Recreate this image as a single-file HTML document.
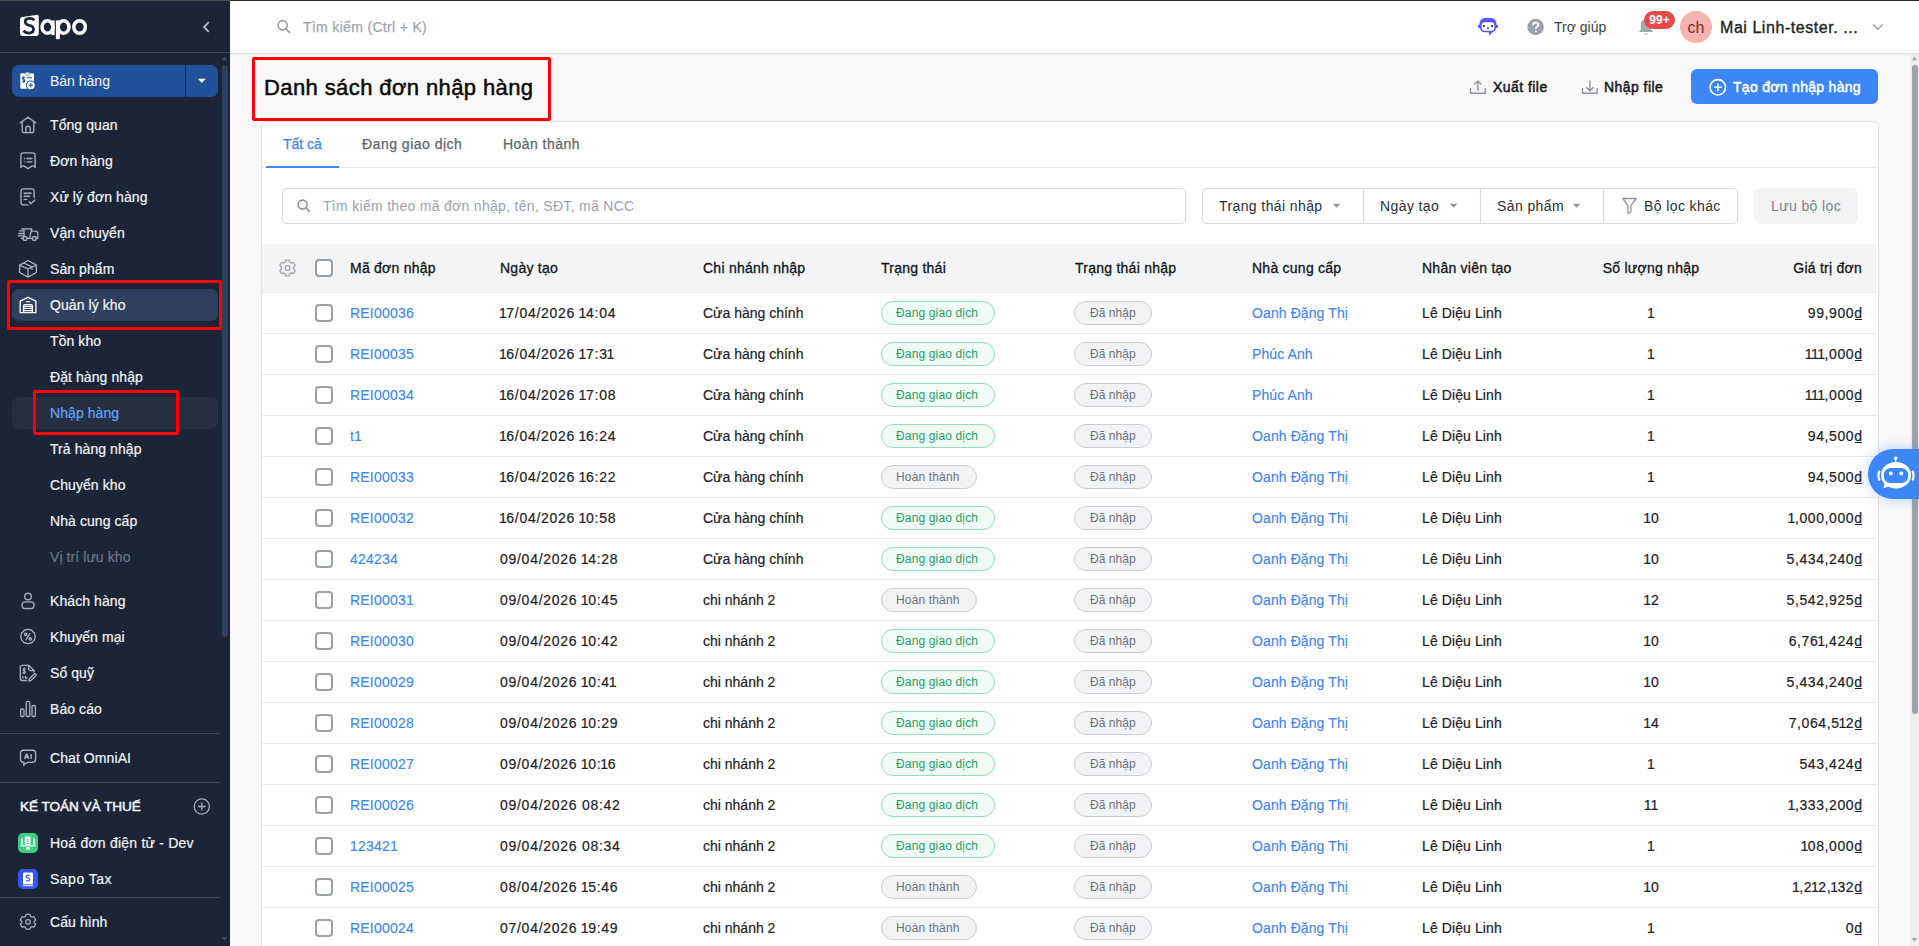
<!DOCTYPE html><html><head><meta charset="utf-8"><style>
html,body{margin:0;padding:0;}
body{width:1919px;height:946px;overflow:hidden;position:relative;background:#f8f8f8;font-family:"Liberation Sans", sans-serif;}
.a{position:absolute;}
.t{position:absolute;white-space:nowrap;}
svg.a{overflow:visible;}
</style></head><body>
<div class="a" style="left:0px;top:0px;width:230px;height:946px;background:#1c2537"></div><svg class="a" style="left:18px;top:12px" width="72" height="30" viewBox="0 0 72 30">
<path d="M2 7.6 Q2 5.4 4.2 5.1 L18.4 2.9 Q20.8 2.6 20.8 5 L20.8 21.6 Q20.8 24 18.4 24 L4.4 24 Q2 24 2 21.6 Z" fill="#fff"/>
<path d="M16.3 8.3 Q14.6 6.3 11.3 6.4 Q7.2 6.6 7.2 9.8 Q7.3 12.6 11.3 13.3 Q15.6 14 15.5 17.4 Q15.3 21 11 21.1 Q7.4 21.1 5.5 18.6" fill="none" stroke="#1c2537" stroke-width="2.7"/>
<ellipse cx="29.4" cy="15" rx="5.4" ry="6.2" fill="none" stroke="#fff" stroke-width="3.5"/>
<path d="M35 8.4 V23.2" stroke="#fff" stroke-width="3.4"/>
<ellipse cx="45.6" cy="15" rx="5.4" ry="6.2" fill="none" stroke="#fff" stroke-width="3.5"/>
<path d="M39.9 8.4 V27.2" stroke="#fff" stroke-width="4"/>
<ellipse cx="61.6" cy="15" rx="5.8" ry="6.3" fill="none" stroke="#fff" stroke-width="3.5"/>
</svg><svg class="a" style="left:200px;top:20px" width="12" height="14" viewBox="0 0 12 14"><path d="M8.8 2.2 L4 7 L8.8 11.8" fill="none" stroke="#b7bcc6" stroke-width="1.8"/></svg><div class="a" style="left:0px;top:52px;width:230px;height:1px;background:#3b4455"></div><div class="a" style="left:222px;top:53px;width:8px;height:893px;background:#1a2334"></div><svg class="a" style="left:220px;top:54px" width="10" height="8" viewBox="0 0 10 8"><path d="M1.5 6.5 L4.5 2.5 L7.5 6.5 Z" fill="#34466a"/></svg><div class="a" style="left:222px;top:65px;width:6px;height:572px;background:#2f3f5e;border-radius:3px"></div><svg class="a" style="left:220px;top:935px" width="10" height="8" viewBox="0 0 10 8"><path d="M1.5 2 L4.5 6 L7.5 2 Z" fill="#34466a"/></svg><div class="a" style="left:12px;top:65px;width:206px;height:32px;background:#215299;border-radius:7px"></div><div class="a" style="left:185px;top:65px;width:1px;height:32px;background:#1a2840"></div><svg class="a" style="left:197px;top:78px" width="10" height="6" viewBox="0 0 10 6"><path d="M0.8 0.8 L4.8 4.8 L8.8 0.8 Z" fill="#fff"/></svg><svg class="a" style="left:14px;top:66px" width="30" height="30" viewBox="0 0 30 30">
<rect x="6.3" y="7.3" width="13.7" height="15.5" rx="1.2" fill="#fff"/>
<rect x="11.2" y="6.3" width="4.8" height="2.6" rx="1.2" fill="#fff" stroke="#215299" stroke-width="0.6"/>
<path d="M10.9 11.6 C10.5 10.9 8.5 10.8 8.5 12.2 C8.5 13.5 10.9 13.2 10.9 14.7 C10.9 16 8.9 16.1 8.3 15.3 M9.7 10.2 V16.8" fill="none" stroke="#215299" stroke-width="1.05"/>
<rect x="12.8" y="11.2" width="5" height="1.1" fill="#215299"/>
<circle cx="16.8" cy="19.3" r="4.9" fill="#215299"/>
<circle cx="16.8" cy="19.3" r="3.9" fill="#fff"/>
<path d="M14.6 19.3 H19 M16.8 17.1 V21.5" stroke="#215299" stroke-width="1.1"/>
</svg><div class="t" style="left:50px;top:71.0px;font-size:14px;line-height:20px;color:#f4f6f9;">Bán hàng</div><div class="a" style="left:12px;top:289px;width:206px;height:32px;background:#2f3f5e;border-radius:7px"></div><div class="a" style="left:12px;top:397px;width:206px;height:32px;background:#252f40;border-radius:7px"></div><svg class="a" style="left:14px;top:112px" width="30" height="30" viewBox="0 0 30 30"><path d="M6.2 10.9 L14 5.2 L21.8 10.9" fill="none" stroke="#a9b0bc" stroke-width="1.35" stroke-linecap="round" stroke-linejoin="round"/><path d="M8.2 9.6 V18.4 a2.2 2.2 0 0 0 2.2 2.2 H17.6 a2.2 2.2 0 0 0 2.2 -2.2 V9.6" fill="none" stroke="#a9b0bc" stroke-width="1.35" stroke-linecap="round" stroke-linejoin="round"/><path d="M11.9 20.5 V16.4 a2.15 2.15 0 0 1 4.3 0 V20.5" fill="none" stroke="#a9b0bc" stroke-width="1.35" stroke-linecap="round" stroke-linejoin="round"/></svg><div class="t" style="left:50px;top:115.0px;font-size:14px;line-height:20px;color:#f1f3f6;letter-spacing:0.08px;-webkit-text-stroke:0.2px #f1f3f6;">Tổng quan</div><svg class="a" style="left:14px;top:148px" width="30" height="30" viewBox="0 0 30 30"><path d="M6.9 19.6 V7.2 a2.3 2.3 0 0 1 2.3 -2.3 H18.8 a2.3 2.3 0 0 1 2.3 2.3 V19.6 Q19.8 17.2 17.8 18.2 Q16 19.3 14 20.6 Q12 19.3 10.2 18.2 Q8.2 17.2 6.9 19.6 Z" fill="none" stroke="#a9b0bc" stroke-width="1.35" stroke-linecap="round" stroke-linejoin="round"/><path d="M10.5 10.5 H10.6 M12.8 10.5 H18 M10.5 13.8 H10.6 M13 13.8 H17.9" fill="none" stroke="#a9b0bc" stroke-width="1.35" stroke-linecap="round" stroke-linejoin="round"/></svg><div class="t" style="left:50px;top:151.0px;font-size:14px;line-height:20px;color:#f1f3f6;letter-spacing:0.08px;-webkit-text-stroke:0.2px #f1f3f6;">Đơn hàng</div><svg class="a" style="left:14px;top:184px" width="30" height="30" viewBox="0 0 30 30"><path d="M14 20.9 H9.3 a2.3 2.3 0 0 1 -2.3 -2.3 V7.1 a2.3 2.3 0 0 1 2.3 -2.3 H17.8 a2.3 2.3 0 0 1 2.3 2.3 V13.6" fill="none" stroke="#a9b0bc" stroke-width="1.35" stroke-linecap="round" stroke-linejoin="round"/><path d="M10.1 9.2 H17.1 M10.1 12.2 H15.6 M10.1 15.4 H12.6" fill="none" stroke="#a9b0bc" stroke-width="1.35" stroke-linecap="round" stroke-linejoin="round"/><path d="M15.2 17.8 L16.8 19.7 L20.8 15.9" fill="none" stroke="#a9b0bc" stroke-width="1.35" stroke-linecap="round" stroke-linejoin="round"/></svg><div class="t" style="left:50px;top:187.0px;font-size:14px;line-height:20px;color:#f1f3f6;letter-spacing:0.08px;-webkit-text-stroke:0.2px #f1f3f6;">Xử lý đơn hàng</div><svg class="a" style="left:14px;top:220px" width="30" height="30" viewBox="0 0 30 30"><path d="M7.6 8.9 H17.6 L15.5 18.4 M17.9 11.1 H21.3 a2.5 2.5 0 0 1 2.5 2.5 V18.4 H22.3 M18.3 18.4 H13.1 M9.2 18.4 H7.4 M10 8.9 V16.5" fill="none" stroke="#a9b0bc" stroke-width="1.35" stroke-linecap="round" stroke-linejoin="round"/><circle cx="11.1" cy="18.4" r="1.9" fill="none" stroke="#a9b0bc" stroke-width="1.35" stroke-linecap="round" stroke-linejoin="round"/><circle cx="20.3" cy="18.4" r="1.9" fill="none" stroke="#a9b0bc" stroke-width="1.35" stroke-linecap="round" stroke-linejoin="round"/><path d="M5.6 10.8 H9.4 M4.8 13.5 H9.4 M4.2 15.9 H9.4" fill="none" stroke="#a9b0bc" stroke-width="1.35" stroke-linecap="round" stroke-linejoin="round"/></svg><div class="t" style="left:50px;top:223.0px;font-size:14px;line-height:20px;color:#f1f3f6;letter-spacing:0.08px;-webkit-text-stroke:0.2px #f1f3f6;">Vận chuyển</div><svg class="a" style="left:14px;top:256px" width="30" height="30" viewBox="0 0 30 30"><path d="M14 4.5 L22.4 9.2 V16.5 L14 21.1 L5.6 16.5 V9.2 Z M5.6 9.2 L14 12.8 L22.4 9.2 M14 12.8 V21.1 M9.6 7 L18 10.8 V13.2" fill="none" stroke="#a9b0bc" stroke-width="1.35" stroke-linecap="round" stroke-linejoin="round"/></svg><div class="t" style="left:50px;top:259.0px;font-size:14px;line-height:20px;color:#f1f3f6;letter-spacing:0.08px;-webkit-text-stroke:0.2px #f1f3f6;">Sản phẩm</div><svg class="a" style="left:14px;top:290px" width="30" height="30" viewBox="0 0 30 30"><path d="M6.2 22.6 V11.2 L14 7.3 L21.9 11.2 V22.6 Z M12.4 11.6 H15.5 M9.6 22.6 V15.6 a1 1 0 0 1 1 -1 H17.3 a1 1 0 0 1 1 1 V22.6 M9.6 18.4 H18.3 M9.6 20.6 H18.3 M9.6 16.4 H18.3" fill="none" stroke="#f3f5f8" stroke-width="1.4" stroke-linejoin="round" stroke-linecap="round"/></svg><div class="t" style="left:50px;top:295.0px;font-size:14px;line-height:20px;color:#f4f6f9;letter-spacing:0.08px;-webkit-text-stroke:0.2px #f4f6f9;">Quản lý kho</div><div class="t" style="left:50px;top:331.0px;font-size:14px;line-height:20px;color:#f1f3f6;letter-spacing:0.08px;-webkit-text-stroke:0.2px #f1f3f6;">Tồn kho</div><div class="t" style="left:50px;top:367.0px;font-size:14px;line-height:20px;color:#f1f3f6;letter-spacing:0.08px;-webkit-text-stroke:0.2px #f1f3f6;">Đặt hàng nhập</div><div class="t" style="left:50px;top:403.0px;font-size:14px;line-height:20px;color:#62a6f9;letter-spacing:0.08px;-webkit-text-stroke:0.2px #62a6f9;">Nhập hàng</div><div class="t" style="left:50px;top:439.0px;font-size:14px;line-height:20px;color:#f1f3f6;letter-spacing:0.08px;-webkit-text-stroke:0.2px #f1f3f6;">Trả hàng nhập</div><div class="t" style="left:50px;top:475.0px;font-size:14px;line-height:20px;color:#f1f3f6;letter-spacing:0.08px;-webkit-text-stroke:0.2px #f1f3f6;">Chuyển kho</div><div class="t" style="left:50px;top:511.0px;font-size:14px;line-height:20px;color:#f1f3f6;letter-spacing:0.08px;-webkit-text-stroke:0.2px #f1f3f6;">Nhà cung cấp</div><div class="t" style="left:50px;top:547.0px;font-size:14px;line-height:20px;color:#6f7785;letter-spacing:0.08px;-webkit-text-stroke:0.2px #6f7785;">Vị trí lưu kho</div><svg class="a" style="left:14px;top:586px" width="30" height="30" viewBox="0 0 30 30"><circle cx="14" cy="10.5" r="3.25" fill="none" stroke="#a9b0bc" stroke-width="1.35" stroke-linecap="round" stroke-linejoin="round"/><rect x="8" y="15.8" width="12.1" height="6.7" rx="3.3" fill="none" stroke="#a9b0bc" stroke-width="1.35" stroke-linecap="round" stroke-linejoin="round"/></svg><div class="t" style="left:50px;top:591.0px;font-size:14px;line-height:20px;color:#f1f3f6;letter-spacing:0.08px;-webkit-text-stroke:0.2px #f1f3f6;">Khách hàng</div><svg class="a" style="left:14px;top:622px" width="30" height="30" viewBox="0 0 30 30"><path d="M13.13 7.46 Q14.00 6.90 14.87 7.46 Q15.73 8.03 16.77 7.97 Q17.80 7.92 18.27 8.84 Q18.74 9.76 19.66 10.23 Q20.58 10.70 20.53 11.73 Q20.47 12.77 21.04 13.63 Q21.60 14.50 21.04 15.37 Q20.47 16.23 20.53 17.27 Q20.58 18.30 19.66 18.77 Q18.74 19.24 18.27 20.16 Q17.80 21.08 16.77 21.03 Q15.73 20.97 14.87 21.54 Q14.00 22.10 13.13 21.54 Q12.27 20.97 11.23 21.03 Q10.20 21.08 9.73 20.16 Q9.26 19.24 8.34 18.77 Q7.42 18.30 7.47 17.27 Q7.53 16.23 6.96 15.37 Q6.40 14.50 6.96 13.63 Q7.53 12.77 7.47 11.73 Q7.42 10.70 8.34 10.23 Q9.26 9.76 9.73 8.84 Q10.20 7.92 11.23 7.97 Q12.27 8.03 13.13 7.46 Z" fill="none" stroke="#a9b0bc" stroke-width="1.35" stroke-linecap="round" stroke-linejoin="round"/><circle cx="11.7" cy="12.4" r="1.15" fill="none" stroke="#a9b0bc" stroke-width="1.35" stroke-linecap="round" stroke-linejoin="round"/><circle cx="16.3" cy="16.9" r="1.15" fill="none" stroke="#a9b0bc" stroke-width="1.35" stroke-linecap="round" stroke-linejoin="round"/><path d="M15.9 11.6 L12.1 17.7" fill="none" stroke="#a9b0bc" stroke-width="1.35" stroke-linecap="round" stroke-linejoin="round"/></svg><div class="t" style="left:50px;top:627.0px;font-size:14px;line-height:20px;color:#f1f3f6;letter-spacing:0.08px;-webkit-text-stroke:0.2px #f1f3f6;">Khuyến mại</div><svg class="a" style="left:14px;top:658px" width="30" height="30" viewBox="0 0 30 30"><path d="M12.8 22.5 H8.3 a2 2 0 0 1 -2 -2 V9.3 a2 2 0 0 1 2 -2 H14.6 L20 12.6 V14" fill="none" stroke="#a9b0bc" stroke-width="1.35" stroke-linecap="round" stroke-linejoin="round"/><path d="M14.6 7.3 V10.6 a2 2 0 0 0 2 2 H20" fill="none" stroke="#a9b0bc" stroke-width="1.35" stroke-linecap="round" stroke-linejoin="round"/><path d="M11.3 10.8 Q10 10.3 9.3 11.2 Q8.8 12.4 10.2 12.8 Q11.6 13.3 11.1 14.5 Q10.4 15.4 9 14.8 M10.2 9.8 V15.8" fill="none" stroke="#a9b0bc" stroke-width="1.35" stroke-linecap="round" stroke-linejoin="round"/><path d="M8.8 18.4 V20 M11.5 18.4 V20 H13" fill="none" stroke="#a9b0bc" stroke-width="1.35" stroke-linecap="round" stroke-linejoin="round"/><path d="M15 23 L15.4 20.8 L20.1 16.1 a1.1 1.1 0 0 1 1.6 1.6 L17 22.4 Z" fill="none" stroke="#a9b0bc" stroke-width="1.35" stroke-linecap="round" stroke-linejoin="round"/></svg><div class="t" style="left:50px;top:663.0px;font-size:14px;line-height:20px;color:#f1f3f6;letter-spacing:0.08px;-webkit-text-stroke:0.2px #f1f3f6;">Sổ quỹ</div><svg class="a" style="left:14px;top:694px" width="30" height="30" viewBox="0 0 30 30"><rect x="6.6" y="15" width="3.4" height="7.5" rx="1.2" fill="none" stroke="#a9b0bc" stroke-width="1.35" stroke-linecap="round" stroke-linejoin="round"/><rect x="12.3" y="7.4" width="3.4" height="15.1" rx="1.2" fill="none" stroke="#a9b0bc" stroke-width="1.35" stroke-linecap="round" stroke-linejoin="round"/><rect x="18" y="11.5" width="3.4" height="11" rx="1.2" fill="none" stroke="#a9b0bc" stroke-width="1.35" stroke-linecap="round" stroke-linejoin="round"/></svg><div class="t" style="left:50px;top:699.0px;font-size:14px;line-height:20px;color:#f1f3f6;letter-spacing:0.08px;-webkit-text-stroke:0.2px #f1f3f6;">Báo cáo</div><svg class="a" style="left:14px;top:743px" width="30" height="30" viewBox="0 0 30 30"><path d="M9.5 7.2 H18.6 a3 3 0 0 1 3 3 V16.3 a3 3 0 0 1 -3 3 H13.8 L9.5 22.2 L10.2 19.3 H9.5 a3 3 0 0 1 -3 -3 V10.2 a3 3 0 0 1 3 -3 Z" fill="none" stroke="#a9b0bc" stroke-width="1.35" stroke-linecap="round" stroke-linejoin="round"/><path d="M10.6 15.9 L12.3 11.2 H13 L14.7 15.9 M11.3 14.3 H14 M17.1 11.1 V15.9" fill="none" stroke="#a9b0bc" stroke-width="1.45" stroke-linejoin="round"/></svg><div class="t" style="left:50px;top:748.0px;font-size:14px;line-height:20px;color:#f1f3f6;letter-spacing:0.08px;-webkit-text-stroke:0.2px #f1f3f6;">Chat OmniAI</div><svg class="a" style="left:14px;top:907px" width="30" height="30" viewBox="0 0 30 30"><g transform="translate(14,14.85) scale(0.92) translate(-13.9,-15.3)"><path d="M11.7 7.3 H16.1 L16.6 9.4 L18.3 10.3 L20.3 9.6 L22.3 13.1 L20.7 14.6 L20.7 16.2 L22.3 17.6 L20.3 21.1 L18.3 20.4 L16.6 21.3 L16.1 23.3 H11.7 L11.2 21.3 L9.5 20.4 L7.5 21.1 L5.5 17.6 L7.1 16.2 V14.6 L5.5 13.1 L7.5 9.6 L9.5 10.3 L11.2 9.4 Z" fill="none" stroke="#a9b0bc" stroke-width="1.35" stroke-linecap="round" stroke-linejoin="round"/><circle cx="13.9" cy="15.3" r="2.5" fill="none" stroke="#a9b0bc" stroke-width="1.35" stroke-linecap="round" stroke-linejoin="round"/></g></svg><div class="t" style="left:50px;top:912.0px;font-size:14px;line-height:20px;color:#f1f3f6;letter-spacing:0.08px;-webkit-text-stroke:0.2px #f1f3f6;">Cấu hình</div><div class="a" style="left:0px;top:733px;width:220px;height:1px;background:#3a4456"></div><div class="a" style="left:0px;top:782px;width:220px;height:1px;background:#3a4456"></div><div class="a" style="left:0px;top:897px;width:220px;height:1px;background:#3a4456"></div><div class="t" style="left:20px;top:797.0px;font-size:13.6px;line-height:20px;color:#f1f3f6;letter-spacing:-0.05px;-webkit-text-stroke:0.5px #f1f3f6;">KẾ TOÁN VÀ THUẾ</div><svg class="a" style="left:192px;top:797px" width="20" height="20" viewBox="0 0 20 20"><circle cx="9.8" cy="9.5" r="7.6" fill="none" stroke="#a9b0bc" stroke-width="1.3"/><path d="M9.8 5.6 V13.4 M5.9 9.5 H13.7" stroke="#a9b0bc" stroke-width="1.3"/></svg><svg class="a" style="left:18px;top:833px" width="20" height="20" viewBox="0 0 20 20"><rect x="0" y="0" width="20" height="20" rx="5" fill="#3ccd82"/>
<rect x="3.2" y="5.3" width="1.6" height="6.4" fill="#fff"/><rect x="15.2" y="5.3" width="1.6" height="6.4" fill="#fff"/>
<rect x="6.8" y="3.6" width="5.8" height="8.2" fill="#fff"/><path d="M8.2 6 H9.5 V8.4 H11 M8.4 10.5 H11" stroke="#3ccd82" stroke-width="0.8" fill="none"/>
<path d="M2.5 12.8 H17.5" stroke="#e6f8ee" stroke-width="1.3"/><path d="M8.5 14 H11.5 L12.2 16.6 H7.8 Z" fill="#fff"/></svg><div class="t" style="left:50px;top:833.0px;font-size:14px;line-height:20px;color:#f1f3f6;letter-spacing:0.22px;-webkit-text-stroke:0.2px #f1f3f6;">Hoá đơn điện tử - Dev</div><svg class="a" style="left:18px;top:869px" width="20" height="20" viewBox="0 0 20 20"><rect x="0" y="0" width="20" height="20" rx="5" fill="#3557f5"/>
<rect x="5" y="3.5" width="10" height="11.5" rx="0.8" fill="#fff"/><path d="M5 15.6 H15 V17.2 H5 Z" fill="#d9e0ff"/>
<path d="M11.6 6.5 Q10 5.6 8.6 6.5 Q7.6 7.6 9.2 8.6 L10.8 9.4 Q12.4 10.4 11.2 11.6 Q9.8 12.4 8.2 11.4" fill="none" stroke="#3557f5" stroke-width="1.2"/></svg><div class="t" style="left:50px;top:869.0px;font-size:14px;line-height:20px;color:#f1f3f6;letter-spacing:0.5px;-webkit-text-stroke:0.2px #f1f3f6;">Sapo Tax</div><div class="a" style="left:7px;top:280px;width:215px;height:50px;box-sizing:border-box;border:3px solid #ff0000;border-radius:2px"></div><div class="a" style="left:33px;top:390px;width:146px;height:45px;box-sizing:border-box;border:3px solid #ff0000;border-radius:2px"></div><div class="a" style="left:230px;top:0px;width:1689px;height:53px;background:#fff;border-bottom:1px solid #dedede;box-shadow:0 1px 2px rgba(0,0,0,0.04)"></div><svg class="a" style="left:276px;top:19px" width="16" height="16" viewBox="0 0 16 16"><circle cx="6.7" cy="6.3" r="4.6" fill="none" stroke="#9aa1ac" stroke-width="1.7"/><path d="M10.1 9.8 L13.6 13.3" stroke="#9aa1ac" stroke-width="1.8" stroke-linecap="round"/></svg><div class="t" style="left:303px;top:17.0px;font-size:14px;line-height:20px;color:#a0a6b0;letter-spacing:0.33px;-webkit-text-stroke:0.25px #a0a6b0;">Tìm kiếm (Ctrl + K)</div><svg class="a" style="left:1472px;top:12px" width="32" height="30" viewBox="0 0 32 30"><rect x="6" y="12.7" width="3" height="3.3" rx="1" fill="#5558f5"/><rect x="23" y="12.7" width="3" height="3.3" rx="1" fill="#5558f5"/>
<rect x="7.6" y="6" width="16.8" height="14.3" rx="5.5" fill="#5558f5"/><path d="M16.6 19.5 L17.5 23.8 L20.8 19.5 Z" fill="#5558f5"/>
<rect x="9.6" y="10.2" width="12.8" height="8.5" rx="3.2" fill="#fff"/><circle cx="11.9" cy="14.1" r="1.05" fill="#1c1c70"/><circle cx="20" cy="14.1" r="1.05" fill="#1c1c70"/><path d="M14.6 15.6 H17.3 Q17 17.1 15.95 17.1 Q14.9 17.1 14.6 15.6 Z" fill="#1c1c70"/></svg><svg class="a" style="left:1527px;top:18px" width="18" height="18" viewBox="0 0 18 18"><circle cx="8.6" cy="9" r="8.3" fill="#9ca3af"/><path d="M6 7.2 Q6 4.6 8.7 4.6 Q11.3 4.6 11.3 6.9 Q11.3 8.3 9.8 9 Q8.8 9.5 8.8 10.8" fill="none" stroke="#fff" stroke-width="1.7"/><circle cx="8.8" cy="13.3" r="1.05" fill="#fff"/></svg><div class="t" style="left:1554px;top:17.0px;font-size:14px;line-height:20px;color:#3a3f47;">Trợ giúp</div><svg class="a" style="left:1636px;top:16px" width="20" height="22" viewBox="0 0 20 22"><path d="M10 3 Q15 3.5 15.2 9 V13.5 L17 16 H3 L4.8 13.5 V9 Q5 3.5 10 3 Z" fill="#a3a9b3"/><path d="M8 17.5 Q10 20 12 17.5 Z" fill="#a3a9b3"/></svg><div class="a" style="left:1644px;top:11px;width:31px;height:18px;background:#e54a4a;border-radius:9px"></div><div class="t" style="left:1459.5px;width:400px;text-align:center;top:12.0px;font-size:12px;line-height:16px;color:#fff;font-weight:700;">99+</div><div class="a" style="left:1680px;top:11px;width:32px;height:32px;background:#f5b3b1;border-radius:50%"></div><div class="t" style="left:1496px;width:400px;text-align:center;top:18.0px;font-size:16px;line-height:20px;color:#7a2a2a;">ch</div><div class="t" style="left:1720px;top:18.0px;font-size:16px;line-height:20px;color:#1b1f26;letter-spacing:0.55px;-webkit-text-stroke:0.35px #1b1f26;">Mai Linh-tester. ...</div><svg class="a" style="left:1871px;top:22px" width="14" height="10" viewBox="0 0 14 10"><path d="M2 2.5 L6.8 7.3 L11.6 2.5" fill="none" stroke="#9aa1ac" stroke-width="1.4"/></svg><div class="a" style="left:1910px;top:54px;width:9px;height:892px;background:#efefef"></div><svg class="a" style="left:1910px;top:54px" width="9" height="10" viewBox="0 0 9 10"><path d="M1.8 6.2 L4.5 2.6 L7.2 6.2 Z" fill="#a0a5ad"/></svg><div class="a" style="left:1912px;top:65px;width:6px;height:649px;background:#9ea3ab;border-radius:3px"></div><svg class="a" style="left:1910px;top:935px" width="9" height="10" viewBox="0 0 9 10"><path d="M1.8 3 L4.5 6.6 L7.2 3 Z" fill="#a0a5ad"/></svg><div class="t" style="left:264px;top:73.0px;font-size:22px;line-height:30px;color:#0a0a0a;letter-spacing:0.4px;-webkit-text-stroke:0.5px #0a0a0a;">Danh sách đơn nhập hàng</div><div class="a" style="left:252px;top:57px;width:299px;height:64px;box-sizing:border-box;border:3px solid #ff0000;border-radius:2px"></div><svg class="a" style="left:1468px;top:78px" width="20" height="18" viewBox="0 0 20 18"><path d="M2.5 10 V15.2 H17.2 V10" fill="none" stroke="#8f96a0" stroke-width="1.4"/><path d="M9.9 13 V3.2 M6.3 6.6 L9.9 3 L13.5 6.6" fill="none" stroke="#8f96a0" stroke-width="1.4"/></svg><div class="t" style="left:1493px;top:77.0px;font-size:14px;line-height:20px;color:#16191e;letter-spacing:0.45px;-webkit-text-stroke:0.5px #16191e;">Xuất file</div><svg class="a" style="left:1580px;top:78px" width="20" height="18" viewBox="0 0 20 18"><path d="M2.5 10 V15.2 H17.2 V10" fill="none" stroke="#8f96a0" stroke-width="1.4"/><path d="M9.9 2.6 V12.6 M6.3 9.2 L9.9 12.8 L13.5 9.2" fill="none" stroke="#8f96a0" stroke-width="1.4"/></svg><div class="t" style="left:1604px;top:77.0px;font-size:14px;line-height:20px;color:#16191e;letter-spacing:0.45px;-webkit-text-stroke:0.5px #16191e;">Nhập file</div><div class="a" style="left:1691px;top:69px;width:187px;height:35px;background:#3d86f6;border-radius:6px"></div><svg class="a" style="left:1708px;top:78px" width="20" height="20" viewBox="0 0 20 20"><circle cx="9.8" cy="9.3" r="7.7" fill="none" stroke="#fff" stroke-width="1.6"/><path d="M9.8 5.4 V13.2 M5.9 9.3 H13.7" stroke="#fff" stroke-width="1.6"/></svg><div class="t" style="left:1733px;top:77.0px;font-size:14px;line-height:20px;color:#fff;letter-spacing:0.3px;-webkit-text-stroke:0.5px #fff;">Tạo đơn nhập hàng</div><div class="a" style="left:261px;top:121px;width:1618px;height:900px;box-sizing:border-box;background:#fff;border:1px solid #e2e3e6;border-radius:6px;box-shadow:0 1px 2px rgba(0,0,0,0.06)"></div><div class="t" style="left:283px;top:134.0px;font-size:14px;line-height:20px;color:#3d86f6;-webkit-text-stroke:0.25px #3d86f6;">Tất cả</div><div class="t" style="left:362px;top:134.0px;font-size:14px;line-height:20px;color:#5e646d;letter-spacing:0.5px;-webkit-text-stroke:0.25px #5e646d;">Đang giao dịch</div><div class="t" style="left:503px;top:134.0px;font-size:14px;line-height:20px;color:#5e646d;letter-spacing:0.45px;-webkit-text-stroke:0.25px #5e646d;">Hoàn thành</div><div class="a" style="left:262px;top:167px;width:1615px;height:1px;background:#e5e7eb"></div><div class="a" style="left:266px;top:166px;width:73px;height:2px;background:#3d86f6"></div><div class="a" style="left:282px;top:188px;width:904px;height:36px;box-sizing:border-box;border:1px solid #d6d9de;border-radius:5px;background:#fff"></div><svg class="a" style="left:296px;top:198px" width="16" height="16" viewBox="0 0 16 16"><circle cx="6.6" cy="6.6" r="4.5" fill="none" stroke="#8f96a0" stroke-width="1.6"/><path d="M10 10 L13.5 13.5" stroke="#8f96a0" stroke-width="1.7" stroke-linecap="round"/></svg><div class="t" style="left:323px;top:196.0px;font-size:14px;line-height:20px;color:#9ca2ac;letter-spacing:0.3px;">Tìm kiếm theo mã đơn nhập, tên, SĐT, mã NCC</div><div class="a" style="left:1202px;top:188px;width:536px;height:36px;box-sizing:border-box;border:1px solid #d6d9de;border-radius:5px;background:#fff"></div><div class="a" style="left:1363px;top:189px;width:1px;height:34px;background:#d6d9de"></div><div class="a" style="left:1480px;top:189px;width:1px;height:34px;background:#d6d9de"></div><div class="a" style="left:1603px;top:189px;width:1px;height:34px;background:#d6d9de"></div><div class="t" style="left:1219px;top:196.0px;font-size:14px;line-height:20px;color:#2a2e35;letter-spacing:0.4px;">Trạng thái nhập</div><svg class="a" style="left:1332px;top:203px" width="10" height="6" viewBox="0 0 10 6"><path d="M0.8 0.8 L4.6 4.8 L8.4 0.8 Z" fill="#8f96a0"/></svg><div class="t" style="left:1380px;top:196.0px;font-size:14px;line-height:20px;color:#2a2e35;letter-spacing:0.4px;">Ngày tạo</div><svg class="a" style="left:1449px;top:203px" width="10" height="6" viewBox="0 0 10 6"><path d="M0.8 0.8 L4.6 4.8 L8.4 0.8 Z" fill="#8f96a0"/></svg><div class="t" style="left:1497px;top:196.0px;font-size:14px;line-height:20px;color:#2a2e35;letter-spacing:0.4px;">Sản phẩm</div><svg class="a" style="left:1572px;top:203px" width="10" height="6" viewBox="0 0 10 6"><path d="M0.8 0.8 L4.6 4.8 L8.4 0.8 Z" fill="#8f96a0"/></svg><svg class="a" style="left:1621px;top:196px" width="18" height="20" viewBox="0 0 18 20"><path d="M1.8 2.5 H15.2 L10 9.5 V15.8 L7 17.6 V9.5 Z" fill="none" stroke="#8f96a0" stroke-width="1.3" stroke-linejoin="round"/></svg><div class="t" style="left:1644px;top:196.0px;font-size:14px;line-height:20px;color:#2a2e35;letter-spacing:0.4px;">Bộ lọc khác</div><div class="a" style="left:1754px;top:188px;width:104px;height:36px;background:#f2f3f5;border-radius:6px"></div><div class="t" style="left:1771px;top:196.0px;font-size:14px;line-height:20px;color:#7b818a;letter-spacing:0.4px;">Lưu bộ lọc</div><div class="a" style="left:262px;top:244px;width:1615px;height:49px;background:#f3f4f6;border-bottom:1px solid #e5e7eb;box-sizing:border-box"></div><svg class="a" style="left:278px;top:258px" width="20" height="20" viewBox="0 0 20 20"><g transform="translate(9.5,10) scale(1.08)"><path d="M-1.6 -7.2 H1.6 L2.1 -5.4 L3.7 -4.5 L5.5 -5.1 L7.1 -2.4 L5.7 -1 V1 L7.1 2.4 L5.5 5.1 L3.7 4.5 L2.1 5.4 L1.6 7.2 H-1.6 L-2.1 5.4 L-3.7 4.5 L-5.5 5.1 L-7.1 2.4 L-5.7 1 V-1 L-7.1 -2.4 L-5.5 -5.1 L-3.7 -4.5 L-2.1 -5.4 Z" fill="none" stroke="#9aa1ac" stroke-width="1.2" stroke-linejoin="round"/><circle cx="0" cy="0" r="2.2" fill="none" stroke="#9aa1ac" stroke-width="1.2"/></g></svg><div class="a" style="left:315px;top:259px;width:18px;height:18px;box-sizing:border-box;border:2px solid #9aa0a8;border-radius:4px;background:#fff"></div><div class="t" style="left:350px;top:258.0px;font-size:14px;line-height:20px;color:#111418;letter-spacing:0.25px;-webkit-text-stroke:0.3px #111418;">Mã đơn nhập</div><div class="t" style="left:500px;top:258.0px;font-size:14px;line-height:20px;color:#111418;letter-spacing:0.25px;-webkit-text-stroke:0.3px #111418;">Ngày tạo</div><div class="t" style="left:703px;top:258.0px;font-size:14px;line-height:20px;color:#111418;letter-spacing:0.25px;-webkit-text-stroke:0.3px #111418;">Chi nhánh nhập</div><div class="t" style="left:881px;top:258.0px;font-size:14px;line-height:20px;color:#111418;letter-spacing:0.25px;-webkit-text-stroke:0.3px #111418;">Trạng thái</div><div class="t" style="left:1075px;top:258.0px;font-size:14px;line-height:20px;color:#111418;letter-spacing:0.25px;-webkit-text-stroke:0.3px #111418;">Trạng thái nhập</div><div class="t" style="left:1252px;top:258.0px;font-size:14px;line-height:20px;color:#111418;letter-spacing:0.25px;-webkit-text-stroke:0.3px #111418;">Nhà cung cấp</div><div class="t" style="left:1422px;top:258.0px;font-size:14px;line-height:20px;color:#111418;letter-spacing:0.25px;-webkit-text-stroke:0.3px #111418;">Nhân viên tạo</div><div class="t" style="left:1451px;width:400px;text-align:center;top:258.0px;font-size:14px;line-height:20px;color:#111418;letter-spacing:0.25px;-webkit-text-stroke:0.3px #111418;">Số lượng nhập</div><div class="t" style="right:57px;top:258.0px;font-size:14px;line-height:20px;color:#111418;letter-spacing:0.25px;-webkit-text-stroke:0.3px #111418;">Giá trị đơn</div><div class="a" style="left:262px;top:333px;width:1615px;height:1px;background:#e8eaed"></div><div class="a" style="left:315px;top:304px;width:18px;height:18px;box-sizing:border-box;border:2px solid #9aa0a8;border-radius:4px;background:#fff"></div><div class="t" style="left:350px;top:302.75px;font-size:14px;line-height:20px;color:#3f86f4;letter-spacing:0.2px;-webkit-text-stroke:0.15px #3f86f4;">REI00036</div><div class="t" style="left:500px;top:302.75px;font-size:14px;line-height:20px;color:#1d2127;letter-spacing:0.72px;-webkit-text-stroke:0.2px #1d2127;"><span style="margin:0 -1.1px">1</span>7/04/2026 <span style="margin:0 -1.1px">1</span>4:04</div><div class="t" style="left:703px;top:302.75px;font-size:14px;line-height:20px;color:#1d2127;-webkit-text-stroke:0.2px #1d2127;">Cửa hàng chính</div><div class="a" style="left:881px;top:301px;width:114px;height:24px;box-sizing:border-box;border:1px solid #8fdfb8;border-radius:12px;background:#f1fbf6"></div><div class="t" style="left:896px;top:302.75px;font-size:12px;line-height:20px;color:#1f9e64;letter-spacing:0.15px;">Đang giao dịch</div><div class="a" style="left:1074px;top:301px;width:78px;height:24px;box-sizing:border-box;border:1px solid #c9cdd3;border-radius:12px;background:#f2f3f5"></div><div class="t" style="left:1090px;top:302.75px;font-size:12px;line-height:20px;color:#6b717b;letter-spacing:0.05px;">Đã nhập</div><div class="t" style="left:1252px;top:302.75px;font-size:14px;line-height:20px;color:#3f86f4;letter-spacing:0.1px;-webkit-text-stroke:0.15px #3f86f4;">Oanh Đặng Thị</div><div class="t" style="left:1422px;top:302.75px;font-size:14px;line-height:20px;color:#1d2127;letter-spacing:0.1px;-webkit-text-stroke:0.2px #1d2127;">Lê Diệu Linh</div><div class="t" style="left:1451px;width:400px;text-align:center;top:302.75px;font-size:14px;line-height:20px;color:#1d2127;-webkit-text-stroke:0.2px #1d2127;">1</div><div class="t" style="right:57px;top:302.75px;font-size:14px;line-height:20px;color:#1d2127;letter-spacing:0.6px;-webkit-text-stroke:0.2px #1d2127">99,900<span style="display:inline-block;position:relative;letter-spacing:0">d<span style="position:absolute;left:0.5px;right:0;top:16.5px;height:1px;background:#1d2127"></span></span></div><div class="a" style="left:262px;top:374px;width:1615px;height:1px;background:#e8eaed"></div><div class="a" style="left:315px;top:345px;width:18px;height:18px;box-sizing:border-box;border:2px solid #9aa0a8;border-radius:4px;background:#fff"></div><div class="t" style="left:350px;top:343.75px;font-size:14px;line-height:20px;color:#3f86f4;letter-spacing:0.2px;-webkit-text-stroke:0.15px #3f86f4;">REI00035</div><div class="t" style="left:500px;top:343.75px;font-size:14px;line-height:20px;color:#1d2127;letter-spacing:0.72px;-webkit-text-stroke:0.2px #1d2127;"><span style="margin:0 -1.1px">1</span>6/04/2026 <span style="margin:0 -1.1px">1</span>7:3<span style="margin:0 -1.1px">1</span></div><div class="t" style="left:703px;top:343.75px;font-size:14px;line-height:20px;color:#1d2127;-webkit-text-stroke:0.2px #1d2127;">Cửa hàng chính</div><div class="a" style="left:881px;top:342px;width:114px;height:24px;box-sizing:border-box;border:1px solid #8fdfb8;border-radius:12px;background:#f1fbf6"></div><div class="t" style="left:896px;top:343.75px;font-size:12px;line-height:20px;color:#1f9e64;letter-spacing:0.15px;">Đang giao dịch</div><div class="a" style="left:1074px;top:342px;width:78px;height:24px;box-sizing:border-box;border:1px solid #c9cdd3;border-radius:12px;background:#f2f3f5"></div><div class="t" style="left:1090px;top:343.75px;font-size:12px;line-height:20px;color:#6b717b;letter-spacing:0.05px;">Đã nhập</div><div class="t" style="left:1252px;top:343.75px;font-size:14px;line-height:20px;color:#3f86f4;letter-spacing:0.1px;-webkit-text-stroke:0.15px #3f86f4;">Phúc Anh</div><div class="t" style="left:1422px;top:343.75px;font-size:14px;line-height:20px;color:#1d2127;letter-spacing:0.1px;-webkit-text-stroke:0.2px #1d2127;">Lê Diệu Linh</div><div class="t" style="left:1451px;width:400px;text-align:center;top:343.75px;font-size:14px;line-height:20px;color:#1d2127;-webkit-text-stroke:0.2px #1d2127;">1</div><div class="t" style="right:57px;top:343.75px;font-size:14px;line-height:20px;color:#1d2127;letter-spacing:0.6px;-webkit-text-stroke:0.2px #1d2127"><span style="margin:0 -1.1px">1</span><span style="margin:0 -1.1px">1</span><span style="margin:0 -1.1px">1</span>,000<span style="display:inline-block;position:relative;letter-spacing:0">d<span style="position:absolute;left:0.5px;right:0;top:16.5px;height:1px;background:#1d2127"></span></span></div><div class="a" style="left:262px;top:415px;width:1615px;height:1px;background:#e8eaed"></div><div class="a" style="left:315px;top:386px;width:18px;height:18px;box-sizing:border-box;border:2px solid #9aa0a8;border-radius:4px;background:#fff"></div><div class="t" style="left:350px;top:384.75px;font-size:14px;line-height:20px;color:#3f86f4;letter-spacing:0.2px;-webkit-text-stroke:0.15px #3f86f4;">REI00034</div><div class="t" style="left:500px;top:384.75px;font-size:14px;line-height:20px;color:#1d2127;letter-spacing:0.72px;-webkit-text-stroke:0.2px #1d2127;"><span style="margin:0 -1.1px">1</span>6/04/2026 <span style="margin:0 -1.1px">1</span>7:08</div><div class="t" style="left:703px;top:384.75px;font-size:14px;line-height:20px;color:#1d2127;-webkit-text-stroke:0.2px #1d2127;">Cửa hàng chính</div><div class="a" style="left:881px;top:383px;width:114px;height:24px;box-sizing:border-box;border:1px solid #8fdfb8;border-radius:12px;background:#f1fbf6"></div><div class="t" style="left:896px;top:384.75px;font-size:12px;line-height:20px;color:#1f9e64;letter-spacing:0.15px;">Đang giao dịch</div><div class="a" style="left:1074px;top:383px;width:78px;height:24px;box-sizing:border-box;border:1px solid #c9cdd3;border-radius:12px;background:#f2f3f5"></div><div class="t" style="left:1090px;top:384.75px;font-size:12px;line-height:20px;color:#6b717b;letter-spacing:0.05px;">Đã nhập</div><div class="t" style="left:1252px;top:384.75px;font-size:14px;line-height:20px;color:#3f86f4;letter-spacing:0.1px;-webkit-text-stroke:0.15px #3f86f4;">Phúc Anh</div><div class="t" style="left:1422px;top:384.75px;font-size:14px;line-height:20px;color:#1d2127;letter-spacing:0.1px;-webkit-text-stroke:0.2px #1d2127;">Lê Diệu Linh</div><div class="t" style="left:1451px;width:400px;text-align:center;top:384.75px;font-size:14px;line-height:20px;color:#1d2127;-webkit-text-stroke:0.2px #1d2127;">1</div><div class="t" style="right:57px;top:384.75px;font-size:14px;line-height:20px;color:#1d2127;letter-spacing:0.6px;-webkit-text-stroke:0.2px #1d2127"><span style="margin:0 -1.1px">1</span><span style="margin:0 -1.1px">1</span><span style="margin:0 -1.1px">1</span>,000<span style="display:inline-block;position:relative;letter-spacing:0">d<span style="position:absolute;left:0.5px;right:0;top:16.5px;height:1px;background:#1d2127"></span></span></div><div class="a" style="left:262px;top:456px;width:1615px;height:1px;background:#e8eaed"></div><div class="a" style="left:315px;top:427px;width:18px;height:18px;box-sizing:border-box;border:2px solid #9aa0a8;border-radius:4px;background:#fff"></div><div class="t" style="left:350px;top:425.75px;font-size:14px;line-height:20px;color:#3f86f4;letter-spacing:0.2px;-webkit-text-stroke:0.15px #3f86f4;">t1</div><div class="t" style="left:500px;top:425.75px;font-size:14px;line-height:20px;color:#1d2127;letter-spacing:0.72px;-webkit-text-stroke:0.2px #1d2127;"><span style="margin:0 -1.1px">1</span>6/04/2026 <span style="margin:0 -1.1px">1</span>6:24</div><div class="t" style="left:703px;top:425.75px;font-size:14px;line-height:20px;color:#1d2127;-webkit-text-stroke:0.2px #1d2127;">Cửa hàng chính</div><div class="a" style="left:881px;top:424px;width:114px;height:24px;box-sizing:border-box;border:1px solid #8fdfb8;border-radius:12px;background:#f1fbf6"></div><div class="t" style="left:896px;top:425.75px;font-size:12px;line-height:20px;color:#1f9e64;letter-spacing:0.15px;">Đang giao dịch</div><div class="a" style="left:1074px;top:424px;width:78px;height:24px;box-sizing:border-box;border:1px solid #c9cdd3;border-radius:12px;background:#f2f3f5"></div><div class="t" style="left:1090px;top:425.75px;font-size:12px;line-height:20px;color:#6b717b;letter-spacing:0.05px;">Đã nhập</div><div class="t" style="left:1252px;top:425.75px;font-size:14px;line-height:20px;color:#3f86f4;letter-spacing:0.1px;-webkit-text-stroke:0.15px #3f86f4;">Oanh Đặng Thị</div><div class="t" style="left:1422px;top:425.75px;font-size:14px;line-height:20px;color:#1d2127;letter-spacing:0.1px;-webkit-text-stroke:0.2px #1d2127;">Lê Diệu Linh</div><div class="t" style="left:1451px;width:400px;text-align:center;top:425.75px;font-size:14px;line-height:20px;color:#1d2127;-webkit-text-stroke:0.2px #1d2127;">1</div><div class="t" style="right:57px;top:425.75px;font-size:14px;line-height:20px;color:#1d2127;letter-spacing:0.6px;-webkit-text-stroke:0.2px #1d2127">94,500<span style="display:inline-block;position:relative;letter-spacing:0">d<span style="position:absolute;left:0.5px;right:0;top:16.5px;height:1px;background:#1d2127"></span></span></div><div class="a" style="left:262px;top:497px;width:1615px;height:1px;background:#e8eaed"></div><div class="a" style="left:315px;top:468px;width:18px;height:18px;box-sizing:border-box;border:2px solid #9aa0a8;border-radius:4px;background:#fff"></div><div class="t" style="left:350px;top:466.75px;font-size:14px;line-height:20px;color:#3f86f4;letter-spacing:0.2px;-webkit-text-stroke:0.15px #3f86f4;">REI00033</div><div class="t" style="left:500px;top:466.75px;font-size:14px;line-height:20px;color:#1d2127;letter-spacing:0.72px;-webkit-text-stroke:0.2px #1d2127;"><span style="margin:0 -1.1px">1</span>6/04/2026 <span style="margin:0 -1.1px">1</span>6:22</div><div class="t" style="left:703px;top:466.75px;font-size:14px;line-height:20px;color:#1d2127;-webkit-text-stroke:0.2px #1d2127;">Cửa hàng chính</div><div class="a" style="left:881px;top:465px;width:96px;height:24px;box-sizing:border-box;border:1px solid #c9cdd3;border-radius:12px;background:#f2f3f5"></div><div class="t" style="left:896px;top:466.75px;font-size:12px;line-height:20px;color:#6b717b;letter-spacing:0.15px;">Hoàn thành</div><div class="a" style="left:1074px;top:465px;width:78px;height:24px;box-sizing:border-box;border:1px solid #c9cdd3;border-radius:12px;background:#f2f3f5"></div><div class="t" style="left:1090px;top:466.75px;font-size:12px;line-height:20px;color:#6b717b;letter-spacing:0.05px;">Đã nhập</div><div class="t" style="left:1252px;top:466.75px;font-size:14px;line-height:20px;color:#3f86f4;letter-spacing:0.1px;-webkit-text-stroke:0.15px #3f86f4;">Oanh Đặng Thị</div><div class="t" style="left:1422px;top:466.75px;font-size:14px;line-height:20px;color:#1d2127;letter-spacing:0.1px;-webkit-text-stroke:0.2px #1d2127;">Lê Diệu Linh</div><div class="t" style="left:1451px;width:400px;text-align:center;top:466.75px;font-size:14px;line-height:20px;color:#1d2127;-webkit-text-stroke:0.2px #1d2127;">1</div><div class="t" style="right:57px;top:466.75px;font-size:14px;line-height:20px;color:#1d2127;letter-spacing:0.6px;-webkit-text-stroke:0.2px #1d2127">94,500<span style="display:inline-block;position:relative;letter-spacing:0">d<span style="position:absolute;left:0.5px;right:0;top:16.5px;height:1px;background:#1d2127"></span></span></div><div class="a" style="left:262px;top:538px;width:1615px;height:1px;background:#e8eaed"></div><div class="a" style="left:315px;top:509px;width:18px;height:18px;box-sizing:border-box;border:2px solid #9aa0a8;border-radius:4px;background:#fff"></div><div class="t" style="left:350px;top:507.75px;font-size:14px;line-height:20px;color:#3f86f4;letter-spacing:0.2px;-webkit-text-stroke:0.15px #3f86f4;">REI00032</div><div class="t" style="left:500px;top:507.75px;font-size:14px;line-height:20px;color:#1d2127;letter-spacing:0.72px;-webkit-text-stroke:0.2px #1d2127;"><span style="margin:0 -1.1px">1</span>6/04/2026 <span style="margin:0 -1.1px">1</span>0:58</div><div class="t" style="left:703px;top:507.75px;font-size:14px;line-height:20px;color:#1d2127;-webkit-text-stroke:0.2px #1d2127;">Cửa hàng chính</div><div class="a" style="left:881px;top:506px;width:114px;height:24px;box-sizing:border-box;border:1px solid #8fdfb8;border-radius:12px;background:#f1fbf6"></div><div class="t" style="left:896px;top:507.75px;font-size:12px;line-height:20px;color:#1f9e64;letter-spacing:0.15px;">Đang giao dịch</div><div class="a" style="left:1074px;top:506px;width:78px;height:24px;box-sizing:border-box;border:1px solid #c9cdd3;border-radius:12px;background:#f2f3f5"></div><div class="t" style="left:1090px;top:507.75px;font-size:12px;line-height:20px;color:#6b717b;letter-spacing:0.05px;">Đã nhập</div><div class="t" style="left:1252px;top:507.75px;font-size:14px;line-height:20px;color:#3f86f4;letter-spacing:0.1px;-webkit-text-stroke:0.15px #3f86f4;">Oanh Đặng Thị</div><div class="t" style="left:1422px;top:507.75px;font-size:14px;line-height:20px;color:#1d2127;letter-spacing:0.1px;-webkit-text-stroke:0.2px #1d2127;">Lê Diệu Linh</div><div class="t" style="left:1451px;width:400px;text-align:center;top:507.75px;font-size:14px;line-height:20px;color:#1d2127;-webkit-text-stroke:0.2px #1d2127;">10</div><div class="t" style="right:57px;top:507.75px;font-size:14px;line-height:20px;color:#1d2127;letter-spacing:0.6px;-webkit-text-stroke:0.2px #1d2127"><span style="margin:0 -1.1px">1</span>,000,000<span style="display:inline-block;position:relative;letter-spacing:0">d<span style="position:absolute;left:0.5px;right:0;top:16.5px;height:1px;background:#1d2127"></span></span></div><div class="a" style="left:262px;top:579px;width:1615px;height:1px;background:#e8eaed"></div><div class="a" style="left:315px;top:550px;width:18px;height:18px;box-sizing:border-box;border:2px solid #9aa0a8;border-radius:4px;background:#fff"></div><div class="t" style="left:350px;top:548.75px;font-size:14px;line-height:20px;color:#3f86f4;letter-spacing:0.2px;-webkit-text-stroke:0.15px #3f86f4;">424234</div><div class="t" style="left:500px;top:548.75px;font-size:14px;line-height:20px;color:#1d2127;letter-spacing:0.72px;-webkit-text-stroke:0.2px #1d2127;">09/04/2026 <span style="margin:0 -1.1px">1</span>4:28</div><div class="t" style="left:703px;top:548.75px;font-size:14px;line-height:20px;color:#1d2127;-webkit-text-stroke:0.2px #1d2127;">Cửa hàng chính</div><div class="a" style="left:881px;top:547px;width:114px;height:24px;box-sizing:border-box;border:1px solid #8fdfb8;border-radius:12px;background:#f1fbf6"></div><div class="t" style="left:896px;top:548.75px;font-size:12px;line-height:20px;color:#1f9e64;letter-spacing:0.15px;">Đang giao dịch</div><div class="a" style="left:1074px;top:547px;width:78px;height:24px;box-sizing:border-box;border:1px solid #c9cdd3;border-radius:12px;background:#f2f3f5"></div><div class="t" style="left:1090px;top:548.75px;font-size:12px;line-height:20px;color:#6b717b;letter-spacing:0.05px;">Đã nhập</div><div class="t" style="left:1252px;top:548.75px;font-size:14px;line-height:20px;color:#3f86f4;letter-spacing:0.1px;-webkit-text-stroke:0.15px #3f86f4;">Oanh Đặng Thị</div><div class="t" style="left:1422px;top:548.75px;font-size:14px;line-height:20px;color:#1d2127;letter-spacing:0.1px;-webkit-text-stroke:0.2px #1d2127;">Lê Diệu Linh</div><div class="t" style="left:1451px;width:400px;text-align:center;top:548.75px;font-size:14px;line-height:20px;color:#1d2127;-webkit-text-stroke:0.2px #1d2127;">10</div><div class="t" style="right:57px;top:548.75px;font-size:14px;line-height:20px;color:#1d2127;letter-spacing:0.6px;-webkit-text-stroke:0.2px #1d2127">5,434,240<span style="display:inline-block;position:relative;letter-spacing:0">d<span style="position:absolute;left:0.5px;right:0;top:16.5px;height:1px;background:#1d2127"></span></span></div><div class="a" style="left:262px;top:620px;width:1615px;height:1px;background:#e8eaed"></div><div class="a" style="left:315px;top:591px;width:18px;height:18px;box-sizing:border-box;border:2px solid #9aa0a8;border-radius:4px;background:#fff"></div><div class="t" style="left:350px;top:589.75px;font-size:14px;line-height:20px;color:#3f86f4;letter-spacing:0.2px;-webkit-text-stroke:0.15px #3f86f4;">REI00031</div><div class="t" style="left:500px;top:589.75px;font-size:14px;line-height:20px;color:#1d2127;letter-spacing:0.72px;-webkit-text-stroke:0.2px #1d2127;">09/04/2026 <span style="margin:0 -1.1px">1</span>0:45</div><div class="t" style="left:703px;top:589.75px;font-size:14px;line-height:20px;color:#1d2127;-webkit-text-stroke:0.2px #1d2127;">chi nhánh 2</div><div class="a" style="left:881px;top:588px;width:96px;height:24px;box-sizing:border-box;border:1px solid #c9cdd3;border-radius:12px;background:#f2f3f5"></div><div class="t" style="left:896px;top:589.75px;font-size:12px;line-height:20px;color:#6b717b;letter-spacing:0.15px;">Hoàn thành</div><div class="a" style="left:1074px;top:588px;width:78px;height:24px;box-sizing:border-box;border:1px solid #c9cdd3;border-radius:12px;background:#f2f3f5"></div><div class="t" style="left:1090px;top:589.75px;font-size:12px;line-height:20px;color:#6b717b;letter-spacing:0.05px;">Đã nhập</div><div class="t" style="left:1252px;top:589.75px;font-size:14px;line-height:20px;color:#3f86f4;letter-spacing:0.1px;-webkit-text-stroke:0.15px #3f86f4;">Oanh Đặng Thị</div><div class="t" style="left:1422px;top:589.75px;font-size:14px;line-height:20px;color:#1d2127;letter-spacing:0.1px;-webkit-text-stroke:0.2px #1d2127;">Lê Diệu Linh</div><div class="t" style="left:1451px;width:400px;text-align:center;top:589.75px;font-size:14px;line-height:20px;color:#1d2127;-webkit-text-stroke:0.2px #1d2127;">12</div><div class="t" style="right:57px;top:589.75px;font-size:14px;line-height:20px;color:#1d2127;letter-spacing:0.6px;-webkit-text-stroke:0.2px #1d2127">5,542,925<span style="display:inline-block;position:relative;letter-spacing:0">d<span style="position:absolute;left:0.5px;right:0;top:16.5px;height:1px;background:#1d2127"></span></span></div><div class="a" style="left:262px;top:661px;width:1615px;height:1px;background:#e8eaed"></div><div class="a" style="left:315px;top:632px;width:18px;height:18px;box-sizing:border-box;border:2px solid #9aa0a8;border-radius:4px;background:#fff"></div><div class="t" style="left:350px;top:630.75px;font-size:14px;line-height:20px;color:#3f86f4;letter-spacing:0.2px;-webkit-text-stroke:0.15px #3f86f4;">REI00030</div><div class="t" style="left:500px;top:630.75px;font-size:14px;line-height:20px;color:#1d2127;letter-spacing:0.72px;-webkit-text-stroke:0.2px #1d2127;">09/04/2026 <span style="margin:0 -1.1px">1</span>0:42</div><div class="t" style="left:703px;top:630.75px;font-size:14px;line-height:20px;color:#1d2127;-webkit-text-stroke:0.2px #1d2127;">chi nhánh 2</div><div class="a" style="left:881px;top:629px;width:114px;height:24px;box-sizing:border-box;border:1px solid #8fdfb8;border-radius:12px;background:#f1fbf6"></div><div class="t" style="left:896px;top:630.75px;font-size:12px;line-height:20px;color:#1f9e64;letter-spacing:0.15px;">Đang giao dịch</div><div class="a" style="left:1074px;top:629px;width:78px;height:24px;box-sizing:border-box;border:1px solid #c9cdd3;border-radius:12px;background:#f2f3f5"></div><div class="t" style="left:1090px;top:630.75px;font-size:12px;line-height:20px;color:#6b717b;letter-spacing:0.05px;">Đã nhập</div><div class="t" style="left:1252px;top:630.75px;font-size:14px;line-height:20px;color:#3f86f4;letter-spacing:0.1px;-webkit-text-stroke:0.15px #3f86f4;">Oanh Đặng Thị</div><div class="t" style="left:1422px;top:630.75px;font-size:14px;line-height:20px;color:#1d2127;letter-spacing:0.1px;-webkit-text-stroke:0.2px #1d2127;">Lê Diệu Linh</div><div class="t" style="left:1451px;width:400px;text-align:center;top:630.75px;font-size:14px;line-height:20px;color:#1d2127;-webkit-text-stroke:0.2px #1d2127;">10</div><div class="t" style="right:57px;top:630.75px;font-size:14px;line-height:20px;color:#1d2127;letter-spacing:0.6px;-webkit-text-stroke:0.2px #1d2127">6,76<span style="margin:0 -1.1px">1</span>,424<span style="display:inline-block;position:relative;letter-spacing:0">d<span style="position:absolute;left:0.5px;right:0;top:16.5px;height:1px;background:#1d2127"></span></span></div><div class="a" style="left:262px;top:702px;width:1615px;height:1px;background:#e8eaed"></div><div class="a" style="left:315px;top:673px;width:18px;height:18px;box-sizing:border-box;border:2px solid #9aa0a8;border-radius:4px;background:#fff"></div><div class="t" style="left:350px;top:671.75px;font-size:14px;line-height:20px;color:#3f86f4;letter-spacing:0.2px;-webkit-text-stroke:0.15px #3f86f4;">REI00029</div><div class="t" style="left:500px;top:671.75px;font-size:14px;line-height:20px;color:#1d2127;letter-spacing:0.72px;-webkit-text-stroke:0.2px #1d2127;">09/04/2026 <span style="margin:0 -1.1px">1</span>0:4<span style="margin:0 -1.1px">1</span></div><div class="t" style="left:703px;top:671.75px;font-size:14px;line-height:20px;color:#1d2127;-webkit-text-stroke:0.2px #1d2127;">chi nhánh 2</div><div class="a" style="left:881px;top:670px;width:114px;height:24px;box-sizing:border-box;border:1px solid #8fdfb8;border-radius:12px;background:#f1fbf6"></div><div class="t" style="left:896px;top:671.75px;font-size:12px;line-height:20px;color:#1f9e64;letter-spacing:0.15px;">Đang giao dịch</div><div class="a" style="left:1074px;top:670px;width:78px;height:24px;box-sizing:border-box;border:1px solid #c9cdd3;border-radius:12px;background:#f2f3f5"></div><div class="t" style="left:1090px;top:671.75px;font-size:12px;line-height:20px;color:#6b717b;letter-spacing:0.05px;">Đã nhập</div><div class="t" style="left:1252px;top:671.75px;font-size:14px;line-height:20px;color:#3f86f4;letter-spacing:0.1px;-webkit-text-stroke:0.15px #3f86f4;">Oanh Đặng Thị</div><div class="t" style="left:1422px;top:671.75px;font-size:14px;line-height:20px;color:#1d2127;letter-spacing:0.1px;-webkit-text-stroke:0.2px #1d2127;">Lê Diệu Linh</div><div class="t" style="left:1451px;width:400px;text-align:center;top:671.75px;font-size:14px;line-height:20px;color:#1d2127;-webkit-text-stroke:0.2px #1d2127;">10</div><div class="t" style="right:57px;top:671.75px;font-size:14px;line-height:20px;color:#1d2127;letter-spacing:0.6px;-webkit-text-stroke:0.2px #1d2127">5,434,240<span style="display:inline-block;position:relative;letter-spacing:0">d<span style="position:absolute;left:0.5px;right:0;top:16.5px;height:1px;background:#1d2127"></span></span></div><div class="a" style="left:262px;top:743px;width:1615px;height:1px;background:#e8eaed"></div><div class="a" style="left:315px;top:714px;width:18px;height:18px;box-sizing:border-box;border:2px solid #9aa0a8;border-radius:4px;background:#fff"></div><div class="t" style="left:350px;top:712.75px;font-size:14px;line-height:20px;color:#3f86f4;letter-spacing:0.2px;-webkit-text-stroke:0.15px #3f86f4;">REI00028</div><div class="t" style="left:500px;top:712.75px;font-size:14px;line-height:20px;color:#1d2127;letter-spacing:0.72px;-webkit-text-stroke:0.2px #1d2127;">09/04/2026 <span style="margin:0 -1.1px">1</span>0:29</div><div class="t" style="left:703px;top:712.75px;font-size:14px;line-height:20px;color:#1d2127;-webkit-text-stroke:0.2px #1d2127;">chi nhánh 2</div><div class="a" style="left:881px;top:711px;width:114px;height:24px;box-sizing:border-box;border:1px solid #8fdfb8;border-radius:12px;background:#f1fbf6"></div><div class="t" style="left:896px;top:712.75px;font-size:12px;line-height:20px;color:#1f9e64;letter-spacing:0.15px;">Đang giao dịch</div><div class="a" style="left:1074px;top:711px;width:78px;height:24px;box-sizing:border-box;border:1px solid #c9cdd3;border-radius:12px;background:#f2f3f5"></div><div class="t" style="left:1090px;top:712.75px;font-size:12px;line-height:20px;color:#6b717b;letter-spacing:0.05px;">Đã nhập</div><div class="t" style="left:1252px;top:712.75px;font-size:14px;line-height:20px;color:#3f86f4;letter-spacing:0.1px;-webkit-text-stroke:0.15px #3f86f4;">Oanh Đặng Thị</div><div class="t" style="left:1422px;top:712.75px;font-size:14px;line-height:20px;color:#1d2127;letter-spacing:0.1px;-webkit-text-stroke:0.2px #1d2127;">Lê Diệu Linh</div><div class="t" style="left:1451px;width:400px;text-align:center;top:712.75px;font-size:14px;line-height:20px;color:#1d2127;-webkit-text-stroke:0.2px #1d2127;">14</div><div class="t" style="right:57px;top:712.75px;font-size:14px;line-height:20px;color:#1d2127;letter-spacing:0.6px;-webkit-text-stroke:0.2px #1d2127">7,064,5<span style="margin:0 -1.1px">1</span>2<span style="display:inline-block;position:relative;letter-spacing:0">d<span style="position:absolute;left:0.5px;right:0;top:16.5px;height:1px;background:#1d2127"></span></span></div><div class="a" style="left:262px;top:784px;width:1615px;height:1px;background:#e8eaed"></div><div class="a" style="left:315px;top:755px;width:18px;height:18px;box-sizing:border-box;border:2px solid #9aa0a8;border-radius:4px;background:#fff"></div><div class="t" style="left:350px;top:753.75px;font-size:14px;line-height:20px;color:#3f86f4;letter-spacing:0.2px;-webkit-text-stroke:0.15px #3f86f4;">REI00027</div><div class="t" style="left:500px;top:753.75px;font-size:14px;line-height:20px;color:#1d2127;letter-spacing:0.72px;-webkit-text-stroke:0.2px #1d2127;">09/04/2026 <span style="margin:0 -1.1px">1</span>0:<span style="margin:0 -1.1px">1</span>6</div><div class="t" style="left:703px;top:753.75px;font-size:14px;line-height:20px;color:#1d2127;-webkit-text-stroke:0.2px #1d2127;">chi nhánh 2</div><div class="a" style="left:881px;top:752px;width:114px;height:24px;box-sizing:border-box;border:1px solid #8fdfb8;border-radius:12px;background:#f1fbf6"></div><div class="t" style="left:896px;top:753.75px;font-size:12px;line-height:20px;color:#1f9e64;letter-spacing:0.15px;">Đang giao dịch</div><div class="a" style="left:1074px;top:752px;width:78px;height:24px;box-sizing:border-box;border:1px solid #c9cdd3;border-radius:12px;background:#f2f3f5"></div><div class="t" style="left:1090px;top:753.75px;font-size:12px;line-height:20px;color:#6b717b;letter-spacing:0.05px;">Đã nhập</div><div class="t" style="left:1252px;top:753.75px;font-size:14px;line-height:20px;color:#3f86f4;letter-spacing:0.1px;-webkit-text-stroke:0.15px #3f86f4;">Oanh Đặng Thị</div><div class="t" style="left:1422px;top:753.75px;font-size:14px;line-height:20px;color:#1d2127;letter-spacing:0.1px;-webkit-text-stroke:0.2px #1d2127;">Lê Diệu Linh</div><div class="t" style="left:1451px;width:400px;text-align:center;top:753.75px;font-size:14px;line-height:20px;color:#1d2127;-webkit-text-stroke:0.2px #1d2127;">1</div><div class="t" style="right:57px;top:753.75px;font-size:14px;line-height:20px;color:#1d2127;letter-spacing:0.6px;-webkit-text-stroke:0.2px #1d2127">543,424<span style="display:inline-block;position:relative;letter-spacing:0">d<span style="position:absolute;left:0.5px;right:0;top:16.5px;height:1px;background:#1d2127"></span></span></div><div class="a" style="left:262px;top:825px;width:1615px;height:1px;background:#e8eaed"></div><div class="a" style="left:315px;top:796px;width:18px;height:18px;box-sizing:border-box;border:2px solid #9aa0a8;border-radius:4px;background:#fff"></div><div class="t" style="left:350px;top:794.75px;font-size:14px;line-height:20px;color:#3f86f4;letter-spacing:0.2px;-webkit-text-stroke:0.15px #3f86f4;">REI00026</div><div class="t" style="left:500px;top:794.75px;font-size:14px;line-height:20px;color:#1d2127;letter-spacing:0.72px;-webkit-text-stroke:0.2px #1d2127;">09/04/2026 08:42</div><div class="t" style="left:703px;top:794.75px;font-size:14px;line-height:20px;color:#1d2127;-webkit-text-stroke:0.2px #1d2127;">chi nhánh 2</div><div class="a" style="left:881px;top:793px;width:114px;height:24px;box-sizing:border-box;border:1px solid #8fdfb8;border-radius:12px;background:#f1fbf6"></div><div class="t" style="left:896px;top:794.75px;font-size:12px;line-height:20px;color:#1f9e64;letter-spacing:0.15px;">Đang giao dịch</div><div class="a" style="left:1074px;top:793px;width:78px;height:24px;box-sizing:border-box;border:1px solid #c9cdd3;border-radius:12px;background:#f2f3f5"></div><div class="t" style="left:1090px;top:794.75px;font-size:12px;line-height:20px;color:#6b717b;letter-spacing:0.05px;">Đã nhập</div><div class="t" style="left:1252px;top:794.75px;font-size:14px;line-height:20px;color:#3f86f4;letter-spacing:0.1px;-webkit-text-stroke:0.15px #3f86f4;">Oanh Đặng Thị</div><div class="t" style="left:1422px;top:794.75px;font-size:14px;line-height:20px;color:#1d2127;letter-spacing:0.1px;-webkit-text-stroke:0.2px #1d2127;">Lê Diệu Linh</div><div class="t" style="left:1451px;width:400px;text-align:center;top:794.75px;font-size:14px;line-height:20px;color:#1d2127;-webkit-text-stroke:0.2px #1d2127;">11</div><div class="t" style="right:57px;top:794.75px;font-size:14px;line-height:20px;color:#1d2127;letter-spacing:0.6px;-webkit-text-stroke:0.2px #1d2127"><span style="margin:0 -1.1px">1</span>,333,200<span style="display:inline-block;position:relative;letter-spacing:0">d<span style="position:absolute;left:0.5px;right:0;top:16.5px;height:1px;background:#1d2127"></span></span></div><div class="a" style="left:262px;top:866px;width:1615px;height:1px;background:#e8eaed"></div><div class="a" style="left:315px;top:837px;width:18px;height:18px;box-sizing:border-box;border:2px solid #9aa0a8;border-radius:4px;background:#fff"></div><div class="t" style="left:350px;top:835.75px;font-size:14px;line-height:20px;color:#3f86f4;letter-spacing:0.2px;-webkit-text-stroke:0.15px #3f86f4;">123421</div><div class="t" style="left:500px;top:835.75px;font-size:14px;line-height:20px;color:#1d2127;letter-spacing:0.72px;-webkit-text-stroke:0.2px #1d2127;">09/04/2026 08:34</div><div class="t" style="left:703px;top:835.75px;font-size:14px;line-height:20px;color:#1d2127;-webkit-text-stroke:0.2px #1d2127;">chi nhánh 2</div><div class="a" style="left:881px;top:834px;width:114px;height:24px;box-sizing:border-box;border:1px solid #8fdfb8;border-radius:12px;background:#f1fbf6"></div><div class="t" style="left:896px;top:835.75px;font-size:12px;line-height:20px;color:#1f9e64;letter-spacing:0.15px;">Đang giao dịch</div><div class="a" style="left:1074px;top:834px;width:78px;height:24px;box-sizing:border-box;border:1px solid #c9cdd3;border-radius:12px;background:#f2f3f5"></div><div class="t" style="left:1090px;top:835.75px;font-size:12px;line-height:20px;color:#6b717b;letter-spacing:0.05px;">Đã nhập</div><div class="t" style="left:1252px;top:835.75px;font-size:14px;line-height:20px;color:#3f86f4;letter-spacing:0.1px;-webkit-text-stroke:0.15px #3f86f4;">Oanh Đặng Thị</div><div class="t" style="left:1422px;top:835.75px;font-size:14px;line-height:20px;color:#1d2127;letter-spacing:0.1px;-webkit-text-stroke:0.2px #1d2127;">Lê Diệu Linh</div><div class="t" style="left:1451px;width:400px;text-align:center;top:835.75px;font-size:14px;line-height:20px;color:#1d2127;-webkit-text-stroke:0.2px #1d2127;">1</div><div class="t" style="right:57px;top:835.75px;font-size:14px;line-height:20px;color:#1d2127;letter-spacing:0.6px;-webkit-text-stroke:0.2px #1d2127"><span style="margin:0 -1.1px">1</span>08,000<span style="display:inline-block;position:relative;letter-spacing:0">d<span style="position:absolute;left:0.5px;right:0;top:16.5px;height:1px;background:#1d2127"></span></span></div><div class="a" style="left:262px;top:907px;width:1615px;height:1px;background:#e8eaed"></div><div class="a" style="left:315px;top:878px;width:18px;height:18px;box-sizing:border-box;border:2px solid #9aa0a8;border-radius:4px;background:#fff"></div><div class="t" style="left:350px;top:876.75px;font-size:14px;line-height:20px;color:#3f86f4;letter-spacing:0.2px;-webkit-text-stroke:0.15px #3f86f4;">REI00025</div><div class="t" style="left:500px;top:876.75px;font-size:14px;line-height:20px;color:#1d2127;letter-spacing:0.72px;-webkit-text-stroke:0.2px #1d2127;">08/04/2026 <span style="margin:0 -1.1px">1</span>5:46</div><div class="t" style="left:703px;top:876.75px;font-size:14px;line-height:20px;color:#1d2127;-webkit-text-stroke:0.2px #1d2127;">chi nhánh 2</div><div class="a" style="left:881px;top:875px;width:96px;height:24px;box-sizing:border-box;border:1px solid #c9cdd3;border-radius:12px;background:#f2f3f5"></div><div class="t" style="left:896px;top:876.75px;font-size:12px;line-height:20px;color:#6b717b;letter-spacing:0.15px;">Hoàn thành</div><div class="a" style="left:1074px;top:875px;width:78px;height:24px;box-sizing:border-box;border:1px solid #c9cdd3;border-radius:12px;background:#f2f3f5"></div><div class="t" style="left:1090px;top:876.75px;font-size:12px;line-height:20px;color:#6b717b;letter-spacing:0.05px;">Đã nhập</div><div class="t" style="left:1252px;top:876.75px;font-size:14px;line-height:20px;color:#3f86f4;letter-spacing:0.1px;-webkit-text-stroke:0.15px #3f86f4;">Oanh Đặng Thị</div><div class="t" style="left:1422px;top:876.75px;font-size:14px;line-height:20px;color:#1d2127;letter-spacing:0.1px;-webkit-text-stroke:0.2px #1d2127;">Lê Diệu Linh</div><div class="t" style="left:1451px;width:400px;text-align:center;top:876.75px;font-size:14px;line-height:20px;color:#1d2127;-webkit-text-stroke:0.2px #1d2127;">10</div><div class="t" style="right:57px;top:876.75px;font-size:14px;line-height:20px;color:#1d2127;letter-spacing:0.6px;-webkit-text-stroke:0.2px #1d2127"><span style="margin:0 -1.1px">1</span>,2<span style="margin:0 -1.1px">1</span>2,<span style="margin:0 -1.1px">1</span>32<span style="display:inline-block;position:relative;letter-spacing:0">d<span style="position:absolute;left:0.5px;right:0;top:16.5px;height:1px;background:#1d2127"></span></span></div><div class="a" style="left:262px;top:948px;width:1615px;height:1px;background:#e8eaed"></div><div class="a" style="left:315px;top:919px;width:18px;height:18px;box-sizing:border-box;border:2px solid #9aa0a8;border-radius:4px;background:#fff"></div><div class="t" style="left:350px;top:917.75px;font-size:14px;line-height:20px;color:#3f86f4;letter-spacing:0.2px;-webkit-text-stroke:0.15px #3f86f4;">REI00024</div><div class="t" style="left:500px;top:917.75px;font-size:14px;line-height:20px;color:#1d2127;letter-spacing:0.72px;-webkit-text-stroke:0.2px #1d2127;">07/04/2026 <span style="margin:0 -1.1px">1</span>9:49</div><div class="t" style="left:703px;top:917.75px;font-size:14px;line-height:20px;color:#1d2127;-webkit-text-stroke:0.2px #1d2127;">chi nhánh 2</div><div class="a" style="left:881px;top:916px;width:96px;height:24px;box-sizing:border-box;border:1px solid #c9cdd3;border-radius:12px;background:#f2f3f5"></div><div class="t" style="left:896px;top:917.75px;font-size:12px;line-height:20px;color:#6b717b;letter-spacing:0.15px;">Hoàn thành</div><div class="a" style="left:1074px;top:916px;width:78px;height:24px;box-sizing:border-box;border:1px solid #c9cdd3;border-radius:12px;background:#f2f3f5"></div><div class="t" style="left:1090px;top:917.75px;font-size:12px;line-height:20px;color:#6b717b;letter-spacing:0.05px;">Đã nhập</div><div class="t" style="left:1252px;top:917.75px;font-size:14px;line-height:20px;color:#3f86f4;letter-spacing:0.1px;-webkit-text-stroke:0.15px #3f86f4;">Oanh Đặng Thị</div><div class="t" style="left:1422px;top:917.75px;font-size:14px;line-height:20px;color:#1d2127;letter-spacing:0.1px;-webkit-text-stroke:0.2px #1d2127;">Lê Diệu Linh</div><div class="t" style="left:1451px;width:400px;text-align:center;top:917.75px;font-size:14px;line-height:20px;color:#1d2127;-webkit-text-stroke:0.2px #1d2127;">1</div><div class="t" style="right:57px;top:917.75px;font-size:14px;line-height:20px;color:#1d2127;letter-spacing:0.6px;-webkit-text-stroke:0.2px #1d2127">0<span style="display:inline-block;position:relative;letter-spacing:0">d<span style="position:absolute;left:0.5px;right:0;top:16.5px;height:1px;background:#1d2127"></span></span></div><div class="a" style="left:1868px;top:449px;width:80px;height:50px;background:#3c86f6;border-radius:25px;box-shadow:0 0 14px rgba(60,134,246,0.35)"></div><svg class="a" style="left:1870px;top:450px" width="50" height="45" viewBox="0 0 50 45"><circle cx="25.7" cy="8.2" r="1.7" fill="#fff"/><path d="M25.7 8.5 V12.5" stroke="#fff" stroke-width="1.1"/>
<ellipse cx="26" cy="25.2" rx="15" ry="13.3" fill="#fff"/><path d="M14.5 32 L13.6 38.2 L21 35.5 Z" fill="#fff"/>
<rect x="13.8" y="18" width="24.4" height="15" rx="6.5" fill="#3c86f6"/>
<circle cx="20.8" cy="23.4" r="2" fill="#fff"/><circle cx="31.2" cy="23.4" r="2" fill="#fff"/>
<path d="M9.6 20.8 Q7.2 25.6 9.6 30.6" stroke="#fff" stroke-width="2.2" fill="none"/><path d="M42.4 20.8 Q44.8 25.6 42.4 30.6" stroke="#fff" stroke-width="2.2" fill="none"/></svg><div class="a" style="left:0px;top:0px;width:230px;height:1px;background:#4b4e4c"></div><div class="a" style="left:230px;top:0px;width:1689px;height:1px;background:#2b2b2b"></div></body></html>
